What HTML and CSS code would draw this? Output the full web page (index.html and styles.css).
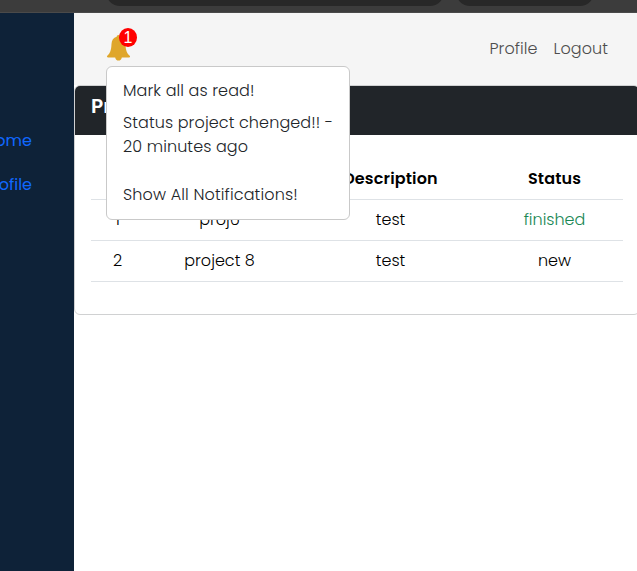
FILE: index.html
```html
<!DOCTYPE html>
<html lang="en">
<head>
<meta charset="utf-8">
<title>Projects</title>
<link rel="stylesheet" href="styles.css">
</head>
<body>
<div class="browser-bar"><span class="pill address"></span><span class="pill tools"></span></div>
<div class="shell">
  <aside class="sidebar">
    <a class="home">Home</a>
    <a class="profile">Profile</a>
  </aside>
  <main class="content">
    <nav class="navbar">
      <div class="notifications">
        <svg class="bell" viewBox="0 0 24 26" width="24" height="26"><path fill="#dfa62a" d="M12.500 0c-1.100 0-1.800.8-1.800 1.700C7.300 2.500 5.700 5.300 5.500 9c-.3 6.300-1.300 9.200-4.200 11.800-.7.700-.4 1.600.6 1.600h7.300c.2 2 1.600 3.100 3.300 3.100s3.100-1.100 3.300-3.100h7.300c1 0 1.300-.9.600-1.600-2.900-2.600-4-5.500-4.200-11.800-.2-3.700-1.900-6.500-5.200-7.300C14.300.8 13.600 0 12.500 0z"/></svg>
        <span class="badge">1</span>
        <div class="menu">
          <a class="item read"><span>Mark all as read!</span></a>
          <a class="item"><span class="status-line">Status project chenged!! -</span><br><span class="ago">20 minutes ago</span></a>
          <a class="item all"><span>Show All Notifications!</span></a>
        </div>
      </div>
      <div class="links"><a class="nav-profile">Profile</a><a class="nav-logout">Logout</a></div>
    </nav>
    <section class="card">
      <header class="card-header">Projects</header>
      <div class="card-body">
        <table class="table">
          <colgroup><col class="col-id"><col class="col-name"><col class="col-desc"><col class="col-status"></colgroup>
          <thead><tr><th>#</th><th>Name</th><th>Description</th><th>Status</th></tr></thead>
          <tbody>
            <tr><td>1</td><td>proj6</td><td>test</td><td class="finished">finished</td></tr>
            <tr><td>2</td><td>project 8</td><td>test</td><td>new</td></tr>
          </tbody>
        </table>
      </div>
    </section>
  </main>
</div>
</body>
</html>
```
FILE: styles.css
```css
* { box-sizing: border-box; }
body {
  margin: 0;
  height: 571px;
  overflow: hidden;
  background: #fff;
  color: #212529;
  font: 300 16px/24px Poppins, Inter, "Open Sans", sans-serif;
}
.browser-bar {
  display: flex;
  gap: 12px;
  height: 13px;
  padding-left: 106px;
  overflow: hidden;
  background: #3c3c3c;
  border-bottom: 1px solid #4a4a4a;
}
.pill { height: 28px; margin-top: -22px; border-radius: 14px; background: #282828; }
.address { width: 338px; }
.tools { width: 138px; }
.shell { display: flex; height: 558px; }
.sidebar {
  display: flex;
  flex: 0 0 74px;
  flex-direction: column;
  align-items: flex-end;
  gap: 20px;
  min-width: 0;
  width: 74px;
  padding: 116px 42px 0 0;
  overflow: hidden;
  background: #0e2238;
  color: #1068ff;
  font-weight: 400;
}
.content { flex: 0 0 566px; }
.navbar {
  display: flex;
  justify-content: space-between;
  height: 72px;
  padding: 0 32px;
  background: #f5f5f5;
}
.notifications { position: relative; padding-top: 22px; }
.bell { display: block; }
.badge {
  position: absolute;
  top: 15px;
  left: 13px;
  width: 18px;
  height: 19px;
  border-radius: 50%;
  background: #f00;
  color: #fff;
  font: 400 16px/19px "Liberation Sans", sans-serif;
  text-align: center;
}
.menu {
  position: absolute;
  z-index: 2;
  top: 53px;
  left: 0;
  width: 244px;
  height: 154px;
  padding: 8px 0;
  border: 1px solid #c9c9c9;
  border-radius: 6px;
  background: #fff;
}
.item { display: block; padding: 4px 16px; white-space: nowrap; letter-spacing: 0.1px; }
.item.all { margin-top: 16px; letter-spacing: 0.14px; }
.links { display: flex; gap: 16px; padding-top: 24px; color: #4d4d4d; letter-spacing: 0.08px; }
.card {
  height: 230px;
  border: 1px solid #d0d1d2;
  border-radius: 6px;
  background: #fff;
  overflow: hidden;
}
.card-header {
  height: 49px;
  padding: 8px 16px;
  background: #212529;
  color: #fff;
  font-size: 20px;
  font-weight: 600;
}
.card-body { padding: 23px 16px; }
.table { width: 532px; table-layout: fixed; border-collapse: collapse; color: #000; text-align: center; }
.col-id { width: 53px; }
.col-name { width: 151px; }
.col-desc { width: 191px; }
.col-status { width: 137px; }
.table th, .table td { height: 41px; padding: 8px 0; border-bottom: 1px solid #dee2e6; }
.table th { padding: 9px 0 7px; font-weight: 600; letter-spacing: 0.15px; }
.table .finished { color: #198754; }
```
